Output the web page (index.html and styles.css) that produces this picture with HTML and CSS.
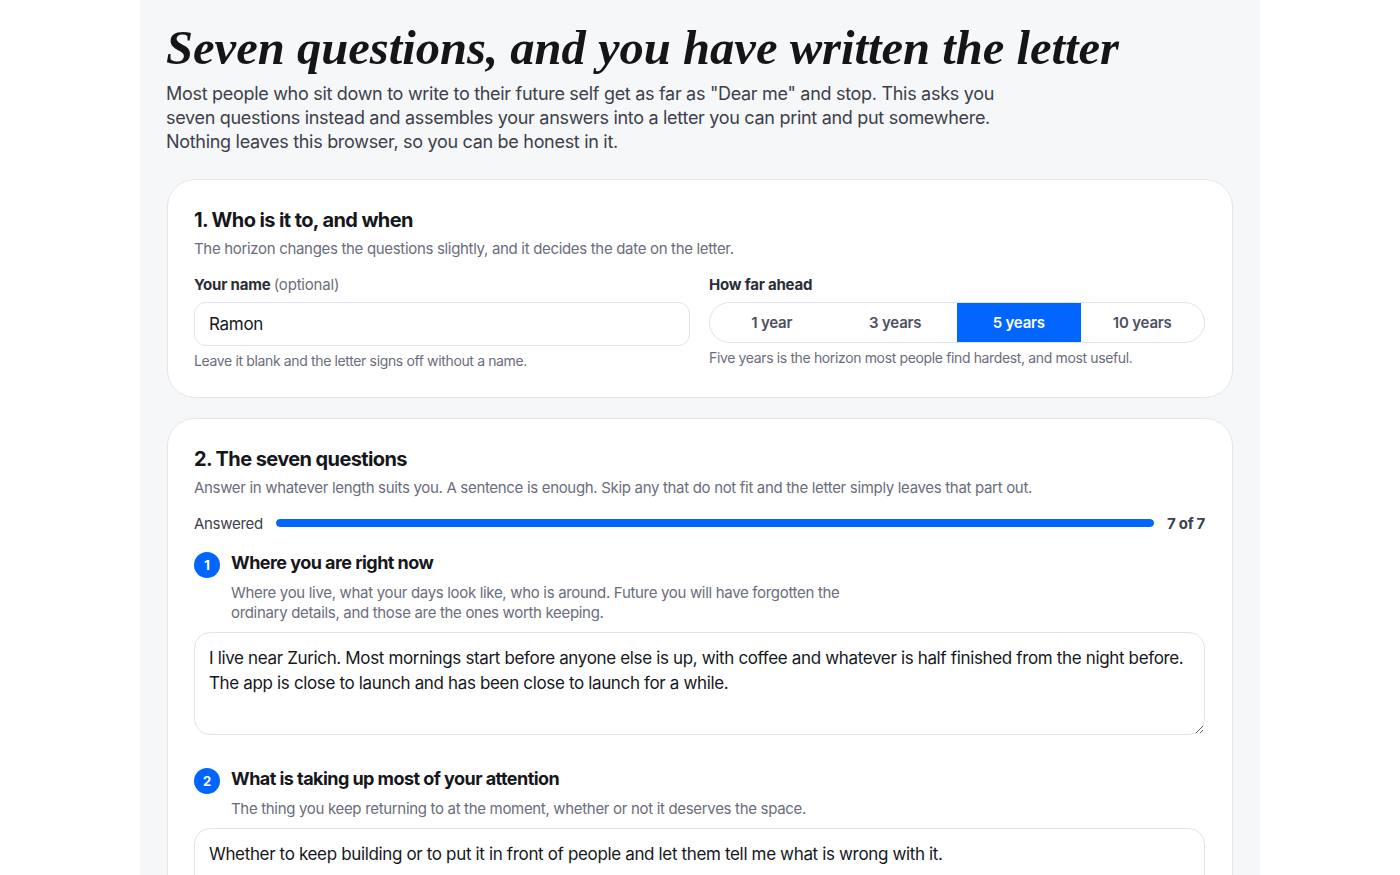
FILE: index.html
```html
<!DOCTYPE html>
<html lang="en">
<head>
<meta charset="utf-8">
<title>Letter to your future self</title>
<link rel="stylesheet" href="styles.css">
</head>
<body>
<main class="page">
  <header class="intro">
    <h1 class="title">Seven questions, and you have written the letter</h1>
    <p class="lede">Most people who sit down to write to their future self get as far as "Dear me" and stop. This asks you seven questions instead and assembles your answers into a letter you can print and put somewhere. Nothing leaves this browser, so you can be honest in it.</p>
  </header>

  <section class="card">
    <h2 class="card-title">1. Who is it to, and when</h2>
    <p class="card-sub">The horizon changes the questions slightly, and it decides the date on the letter.</p>
    <div class="fields">
      <div class="field">
        <label class="label" for="name">Your name <span class="opt">(optional)</span></label>
        <input id="name" class="input" type="text" value="Ramon">
        <p class="help">Leave it blank and the letter signs off without a name.</p>
      </div>
      <div class="field">
        <span class="label">How far ahead</span>
        <div class="segmented">
          <button class="seg">1 year</button>
          <button class="seg">3 years</button>
          <button class="seg active">5 years</button>
          <button class="seg">10 years</button>
        </div>
        <p class="help">Five years is the horizon most people find hardest, and most useful.</p>
      </div>
    </div>
  </section>

  <section class="card">
    <h2 class="card-title">2. The seven questions</h2>
    <p class="card-sub">Answer in whatever length suits you. A sentence is enough. Skip any that do not fit and the letter simply leaves that part out.</p>
    <div class="progress">
      <span class="progress-label">Answered</span>
      <div class="track"><div class="fill" style="width:100%"></div></div>
      <span class="progress-count">7 of 7</span>
    </div>

    <div class="question">
      <div class="q-head">
        <span class="badge">1</span>
        <h3 class="q-title">Where you are right now</h3>
      </div>
      <p class="q-desc">Where you live, what your days look like, who is around. Future you will have forgotten the ordinary details, and those are the ones worth keeping.</p>
      <textarea class="answer" rows="3">I live near Zurich. Most mornings start before anyone else is up, with coffee and whatever is half finished from the night before. The app is close to launch and has been close to launch for a while.</textarea>
    </div>

    <div class="question">
      <div class="q-head">
        <span class="badge">2</span>
        <h3 class="q-title">What is taking up most of your attention</h3>
      </div>
      <p class="q-desc">The thing you keep returning to at the moment, whether or not it deserves the space.</p>
      <textarea class="answer" rows="3">Whether to keep building or to put it in front of people and let them tell me what is wrong with it.</textarea>
    </div>
  </section>
</main>
</body>
</html>
```

FILE: styles.css
```css
* { box-sizing: border-box; }
html, body { margin: 0; padding: 0; }
body {
  background: #ffffff;
  font-family: Inter, "Noto Sans", "Liberation Sans", sans-serif;
  color: #16171c;
  overflow: hidden;
}
.page {
  width: 1120px;
  margin: 0 auto;
  background: #f6f7f9;
  padding: 23px 27px 40px 26px;
  min-height: 875px;
}
.title {
  margin: 0;
  font-family: "Liberation Serif", "DejaVu Serif", serif;
  font-style: italic;
  font-weight: 700;
  font-size: 48.6px;
  line-height: 51px;
  letter-spacing: 0;
  color: #141419;
}
.lede {
  margin: 8px 0 0;
  max-width: 840px;
  font-size: 18px;
  line-height: 24px;
  color: #3d3f4b;
  letter-spacing: -0.3px;
}
.card {
  margin-top: 25px;
  margin-left: 1px;
  background: #ffffff;
  border: 1px solid #e4e6eb;
  border-radius: 28px;
  padding: 27px 27px 26px 26px;
}
.card + .card { margin-top: 20px; }
.card-title {
  margin: 0;
  font-size: 20px;
  line-height: 26px;
  font-weight: 700;
  color: #16171c;
  letter-spacing: -0.6px;
}
.card-sub {
  margin: 6px 0 0;
  font-size: 15px;
  line-height: 20px;
  color: #6a6d7b;
  letter-spacing: -0.32px;
}
.fields {
  margin-top: 16px;
  display: grid;
  grid-template-columns: 1fr 1fr;
  column-gap: 19px;
}
.field { display: flex; flex-direction: column; }
.label {
  font-size: 15px;
  line-height: 20px;
  font-weight: 700;
  color: #2b2d36;
  letter-spacing: -0.2px;
}
.opt { font-weight: 400; color: #6a6d7b; }
.input {
  margin-top: 7px;
  height: 44px;
  border: 1px solid #e1e3e8;
  border-radius: 12px;
  padding: 0 14px;
  font-family: inherit;
  font-size: 17px;
  letter-spacing: -0.3px;
  color: #16171c;
  background: #fff;
  outline: none;
}
.help {
  margin: 5px 0 0;
  font-size: 14px;
  line-height: 20px;
  color: #6a6d7b;
  letter-spacing: -0.36px;
}
.segmented {
  margin-top: 7px;
  height: 41px;
  display: grid;
  grid-template-columns: repeat(4, 1fr);
  border: 1px solid #e1e3e8;
  border-radius: 21px;
  overflow: hidden;
  background: #fff;
}
.seg {
  border: 0;
  background: transparent;
  font-family: inherit;
  font-size: 15px;
  font-weight: 600;
  letter-spacing: -0.2px;
  color: #4e5160;
  padding: 0;
  cursor: pointer;
}
.seg.active { background: #0066ff; color: #ffffff; }
.progress {
  margin-top: 15px;
  display: flex;
  align-items: center;
  gap: 13px;
  height: 20px;
}
.progress-label { font-size: 15px; color: #3d3f4b; letter-spacing: -0.3px; }
.track {
  flex: 1;
  height: 8px;
  border-radius: 4px;
  background: #e8eaef;
  overflow: hidden;
}
.fill { height: 100%; background: #0066ff; border-radius: 4px; }
.progress-count { font-size: 15px; font-weight: 700; color: #3d3f4b; letter-spacing: -0.3px; }
.question { margin-top: 19px; }
.question + .question { margin-top: 33px; }
.q-head { display: flex; align-items: flex-start; gap: 11px; }
.badge {
  width: 26px;
  height: 26px;
  border-radius: 50%;
  background: #0066ff;
  color: #fff;
  font-size: 13px;
  font-weight: 700;
  display: flex;
  align-items: center;
  justify-content: center;
  flex: none;
}
.q-title {
  margin: 0;
  font-size: 18px;
  line-height: 22px;
  font-weight: 700;
  color: #16171c;
  letter-spacing: -0.55px;
}
.q-desc {
  margin: 5px 0 0 37px;
  max-width: 620px;
  font-size: 15px;
  line-height: 20px;
  color: #6a6d7b;
  letter-spacing: -0.32px;
}
.answer {
  display: block;
  margin-top: 9px;
  width: 100%;
  height: 103px;
  border: 1px solid #e1e3e8;
  border-radius: 16px;
  padding: 13px 14px;
  font-family: inherit;
  font-size: 17px;
  line-height: 25px;
  letter-spacing: -0.35px;
  color: #16171c;
  background: #fff;
  resize: vertical;
  outline: none;
}
```
